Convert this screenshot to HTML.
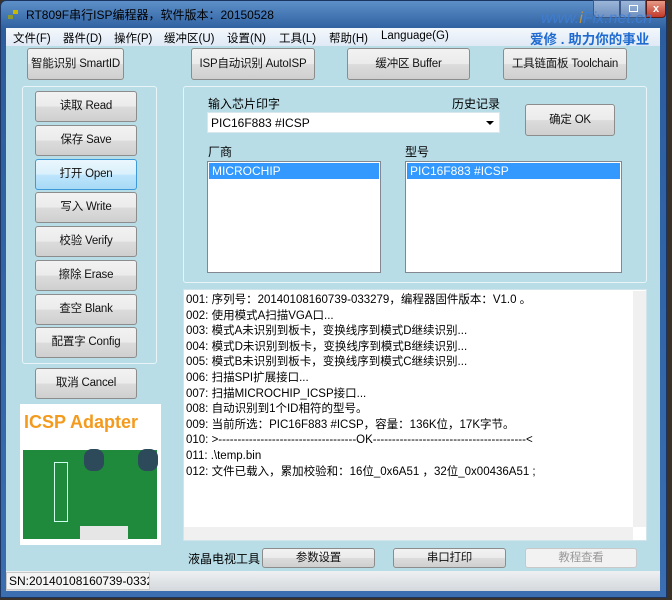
<!DOCTYPE html>
<html><head><meta charset="utf-8"><style>
*{box-sizing:border-box;margin:0;padding:0}
body{width:672px;height:600px;overflow:hidden;background:#3a3228;font-family:"Liberation Sans","Noto Sans CJK SC",sans-serif;font-size:12px;color:#000;position:relative}
.a{position:absolute}
.win{left:0;top:0;width:667px;height:598px;background:linear-gradient(#5d8fc8,#2b5d9e 30px,#3a6eb0);border:1px solid #1b3560;border-radius:6px 6px 0 0}
.cl{left:6px;top:46px;width:654px;height:545px;background:#b9dde6}
.menu{left:6px;top:28px;width:654px;height:18px;background:linear-gradient(#f4f8fc,#dfe9f5);font-size:11.5px}
.menu span{position:absolute;top:2px;white-space:nowrap}
.btn{position:absolute;border:1px solid #8c8c8c;border-radius:3px;background:linear-gradient(#f2f2f2,#ebebeb 50%,#dcdcdc 51%,#cfcfcf);text-align:center;font-size:11.5px;color:#111;white-space:nowrap;letter-spacing:-0.2px}
.grp{position:absolute;border:1px solid #e8f4f8;border-radius:3px}
.lb{position:absolute;background:#fff;border:1px solid #828790}
.sel{background:#3399ff;color:#fff;padding-left:3px;height:16px;line-height:16px;margin:1px}
.log div{height:15.6px;line-height:15.6px;white-space:nowrap}
</style></head><body>
<div class="a win"></div>
<div class="a" style="left:8px;top:10px;width:12px;height:10px"><div class="a" style="left:5px;top:0;width:5px;height:4px;background:#c7b800"></div><div class="a" style="left:0;top:5px;width:5px;height:4px;background:#8a9a30"></div></div>
<div class="a" style="left:26px;top:6px;font-size:12px;color:#000">RT809F串行ISP编程器，软件版本：20150528</div>
<div class="a" style="left:593px;top:0;width:27px;height:18px;background:linear-gradient(#9bb6d8,#6f8fbf);border:1px solid #3b5a8a;border-radius:0 0 0 4px"></div>
<div class="a" style="left:620px;top:0;width:26px;height:18px;background:linear-gradient(#9bb6d8,#6f8fbf);border:1px solid #3b5a8a"><div class="a" style="left:8px;top:4px;width:9px;height:7px;border:1px solid #fff"></div></div>
<div class="a" style="left:646px;top:0;width:20px;height:18px;background:linear-gradient(#e59a86,#c2382a);border:1px solid #5a1a14;border-radius:0 0 4px 0;color:#fff;font-weight:bold;text-align:center;font-size:11px;line-height:16px">x</div>
<div class="a" style="left:541px;top:10px;font-size:16px;font-style:italic;color:#3e7fd8;opacity:.8;white-space:nowrap">www.<span style="color:#e09a20">i</span>Fix.net.cn</div>
<div class="a menu">
<span style="left:7px">文件(F)</span><span style="left:57px">器件(D)</span><span style="left:108px">操作(P)</span><span style="left:158px">缓冲区(U)</span><span style="left:221px">设置(N)</span><span style="left:273px">工具(L)</span><span style="left:323px">帮助(H)</span><span style="left:375px">Language(G)</span>
<span style="left:524px;top:0;font-size:13.5px;font-weight:bold;color:#1f6bd0">爱修 . 助力你的事业</span></div>
<div class="a cl"></div>
<div class="btn" style="left:27px;top:48px;width:97px;height:32px;line-height:30px">智能识别 SmartID</div>
<div class="btn" style="left:191px;top:48px;width:124px;height:32px;line-height:30px">ISP自动识别 AutoISP</div>
<div class="btn" style="left:347px;top:48px;width:123px;height:32px;line-height:30px">缓冲区 Buffer</div>
<div class="btn" style="left:503px;top:48px;width:124px;height:32px;line-height:30px">工具链面板 Toolchain</div>
<div class="grp" style="left:22px;top:86px;width:135px;height:278px"></div>
<div class="btn" style="left:35px;top:91px;width:102px;height:31px;line-height:29px">读取 Read</div>
<div class="btn" style="left:35px;top:125px;width:102px;height:31px;line-height:29px">保存 Save</div>
<div class="btn" style="left:35px;top:159px;width:102px;height:31px;line-height:29px;border-color:#3c9ad8;background:linear-gradient(#eaf6fd,#d9f0fc 50%,#bee6fd 51%,#a7d9f5)">打开 Open</div>
<div class="btn" style="left:35px;top:192px;width:102px;height:31px;line-height:29px">写入 Write</div>
<div class="btn" style="left:35px;top:226px;width:102px;height:31px;line-height:29px">校验 Verify</div>
<div class="btn" style="left:35px;top:260px;width:102px;height:31px;line-height:29px">擦除 Erase</div>
<div class="btn" style="left:35px;top:294px;width:102px;height:31px;line-height:29px">查空 Blank</div>
<div class="btn" style="left:35px;top:327px;width:102px;height:31px;line-height:29px">配置字 Config</div>
<div class="btn" style="left:35px;top:368px;width:102px;height:31px;line-height:29px">取消 Cancel</div>
<div class="a" style="left:20px;top:404px;width:141px;height:141px;background:#fff">
<div class="a" style="left:4px;top:8px;font-size:18px;font-weight:bold;color:#f49a1c;white-space:nowrap">ICSP Adapter</div>
<div class="a" style="left:3px;top:46px;width:134px;height:89px;background:#1f8a3c"></div>
<div class="a" style="left:64px;top:45px;width:20px;height:22px;border-radius:8px;background:#2d4a5a"></div>
<div class="a" style="left:118px;top:45px;width:20px;height:22px;border-radius:8px;background:#2d4a5a"></div>
<div class="a" style="left:60px;top:122px;width:48px;height:14px;background:#e6e6e6"></div>
<div class="a" style="left:34px;top:58px;width:14px;height:60px;border:1px solid #cfe"></div>
</div>
<div class="grp" style="left:183px;top:86px;width:464px;height:197px"></div>
<div class="a" style="left:208px;top:95px">输入芯片印字</div>
<div class="a" style="left:452px;top:95px">历史记录</div>
<div class="lb" style="left:207px;top:112px;width:293px;height:21px;border-color:#d8e6ee"><span style="position:absolute;left:3px;top:3px">PIC16F883 #ICSP</span><span style="position:absolute;right:5px;top:8px;border:4px solid transparent;border-top:4px solid #000"></span></div>
<div class="btn" style="left:525px;top:104px;width:90px;height:32px;line-height:30px">确定 OK</div>
<div class="a" style="left:208px;top:143px">厂商</div>
<div class="a" style="left:405px;top:143px">型号</div>
<div class="lb" style="left:207px;top:161px;width:174px;height:112px"><div class="sel">MICROCHIP</div></div>
<div class="lb" style="left:405px;top:161px;width:217px;height:112px"><div class="sel">PIC16F883 #ICSP</div></div>
<div class="a" style="left:183px;top:289px;width:464px;height:252px;background:#fff;border:1px solid #d0e4ec"></div>
<div class="a" style="left:633px;top:291px;width:13px;height:236px;background:#f0f0f0"></div>
<div class="a" style="left:184px;top:527px;width:449px;height:13px;background:#f0f0f0"></div>
<div class="a log" style="left:186px;top:293px;font-size:11.5px">
<div>001: 序列号：20140108160739-033279，编程器固件版本：V1.0 。</div>
<div>002: 使用模式A扫描VGA口...</div>
<div>003: 模式A未识别到板卡，变换线序到模式D继续识别...</div>
<div>004: 模式D未识别到板卡，变换线序到模式B继续识别...</div>
<div>005: 模式B未识别到板卡，变换线序到模式C继续识别...</div>
<div>006: 扫描SPI扩展接口...</div>
<div>007: 扫描MICROCHIP_ICSP接口...</div>
<div>008: 自动识别到1个ID相符的型号。</div>
<div>009: 当前所选：PIC16F883 #ICSP，容量：136K位，17K字节。</div>
<div>010: &gt;------------------------------------OK----------------------------------------&lt;</div>
<div>011: .\temp.bin</div>
<div>012: 文件已载入，累加校验和：16位_0x6A51 ，32位_0x00436A51 ;</div>
</div>
<div class="a" style="left:188px;top:550px">液晶电视工具</div>
<div class="btn" style="left:262px;top:548px;width:113px;height:20px;line-height:18px">参数设置</div>
<div class="btn" style="left:393px;top:548px;width:113px;height:20px;line-height:18px">串口打印</div>
<div class="btn" style="left:525px;top:548px;width:112px;height:20px;line-height:18px;color:#999;background:#f2f2f2;border-color:#c8c8c8">教程查看</div>
<div class="a" style="left:6px;top:571px;width:654px;height:20px;background:linear-gradient(#eef0f2,#d4d8dc)"></div>
<div class="a" style="left:6px;top:572px;width:144px;height:18px;background:#f4f4f4;border:1px solid #c8c8c8;font-size:12px;padding-left:2px;line-height:16px;overflow:hidden;white-space:nowrap">SN:20140108160739-0332</div>
</body></html>
